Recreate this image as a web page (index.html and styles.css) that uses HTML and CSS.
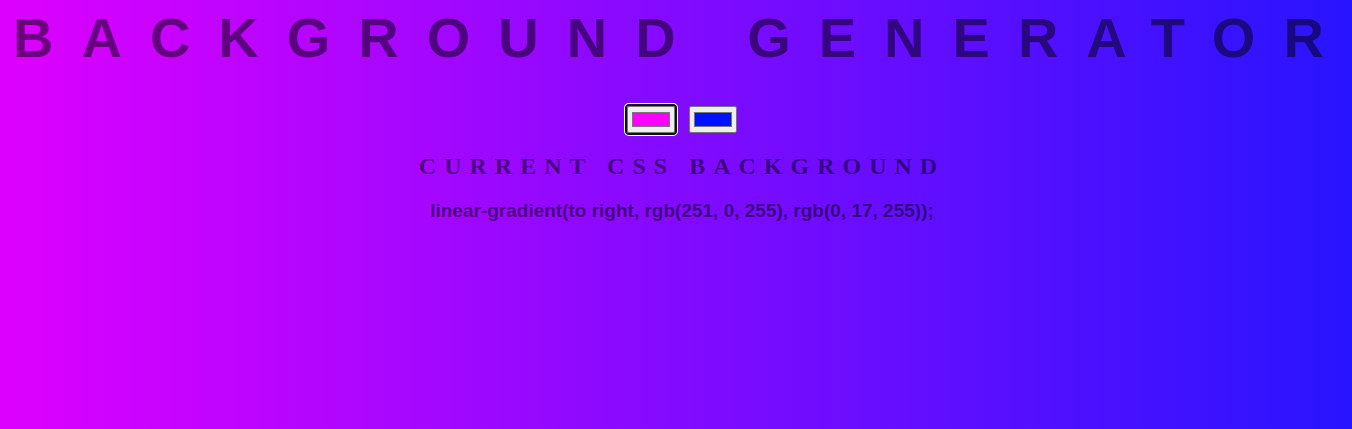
FILE: index.html
```html
<!DOCTYPE html>
<html lang="en">
<head>
  <meta charset="UTF-8" />
  <title>Background Generator</title>
  <link rel="stylesheet" href="styles.css">
</head>
<body>
  <h1>Background Generator</h1>
  <div class="panel">
    <div class="pickers">
      <input class="color1 focused" type="color" name="color1" value="#fb00ff">
      <input class="color2" type="color" name="color2" value="#0011ff">
    </div>
    <h3>Current CSS Background</h3>
    <p class="code">linear-gradient(to right, rgb(251, 0, 255), rgb(0, 17, 255));</p>
  </div>
</body>
</html>
```

FILE: styles.css
```css
body {
  margin: 0 8px;
  min-height: 100vh;
  color: rgba(0, 0, 0, .5);
  text-align: center;
  background: linear-gradient(to right, #de00ff, #2814ff);
}
h1 {
  margin: 0 0 36px;
  padding: 5px 0 0 5px;
  font: bold 56px 'Liberation Sans', Arial, sans-serif;
  text-transform: uppercase;
  letter-spacing: .5em;
  white-space: nowrap;
}
.panel {
  padding-left: 12px;
}
.pickers {
  display: flex;
  justify-content: center;
  gap: 14px;
}
input[type="color"] {
  width: 48px;
  height: 27px;
  margin: 0;
  padding: 1px 2px;
  border: 1px solid #767676;
  border-radius: 2px;
  background: #efefef;
}
.focused {
  outline: 2px solid #101010;
  outline-offset: 0;
  box-shadow: 0 0 0 3px #fff;
}
h3 {
  margin: 20px 0 0;
  font: bold 24px 'Liberation Serif', 'Times New Roman', serif;
  text-transform: uppercase;
  letter-spacing: 8px;
}
.code {
  margin: 20px 0 0;
  font: bold 19px 'Liberation Sans', Arial, sans-serif;
}
```
